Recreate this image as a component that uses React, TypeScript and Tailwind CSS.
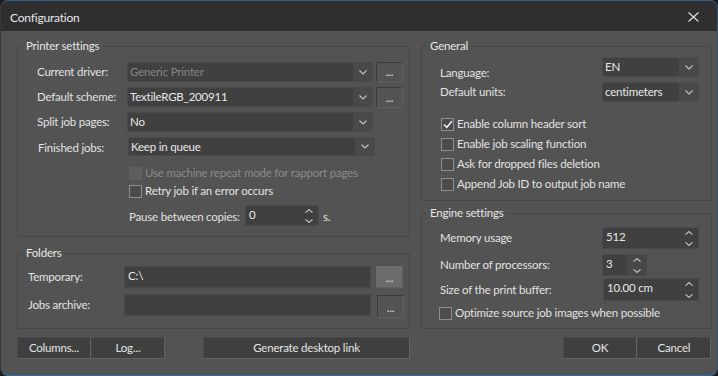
import React from "react";

const font = "font-['Lato','Segoe_UI',sans-serif]";

function Chevron({ up = false }: { up?: boolean }) {
  return (
    <svg width="8" height="5" viewBox="0 0 8 5" className="block">
      <path d={up ? "M0.5 4.5 L4 1 L7.5 4.5" : "M0.5 0.5 L4 4 L7.5 0.5"} stroke="#c4c4c4" fill="none" strokeWidth="1.1" />
    </svg>
  );
}

function SmallChevron({ up = false }: { up?: boolean }) {
  return (
    <svg width="8" height="4" viewBox="0 0 8 4" className="block">
      <path d={up ? "M0.5 3.6 L4 0.6 L7.5 3.6" : "M0.5 0.4 L4 3.4 L7.5 0.4"} stroke="#c8c8c8" fill="none" strokeWidth="1.1" />
    </svg>
  );
}

function Combo({ value, className, disabled = false }: { value: string; className: string; disabled?: boolean }) {
  return (
    <div className={`flex border border-[#4a4a4a] bg-[#404040] ${className}`}>
      <div className={`flex-1 pl-[2px] leading-[17px] ${disabled ? "text-[#858585]" : "text-[#e8e8e8]"}`}>{value}</div>
      <div className="w-[19px] bg-[#494949] flex items-center justify-center">
        <Chevron />
      </div>
    </div>
  );
}

function Spin({ value, className, sep = false }: { value: string; className: string; sep?: boolean }) {
  return (
    <div className={`flex border border-[#4a4a4a] bg-[#404040] ${className}`}>
      <div className="flex-1 pl-[3px] pt-[1px] leading-[16px] text-[#e8e8e8]">{value}</div>
      <div className={`w-[19px] flex flex-col items-center justify-between pt-[3px] pb-[2px] ${sep ? "bg-[#484848]" : ""}`}>
        <SmallChevron up />
        <SmallChevron />
      </div>
    </div>
  );
}

function Dots({ className = "" }: { className?: string }) {
  return (
    <div className={`w-[27px] border border-[#3b3b3b] border-b-[#5f5f5f] border-r-[#5f5f5f] flex items-end justify-center pb-[3px] text-[#e0e0e0] leading-[12px] ${className}`}>
      ...
    </div>
  );
}

function Check({ label, checked = false, disabled = false, className = "" }: { label: string; checked?: boolean; disabled?: boolean; className?: string }) {
  return (
    <div className={`flex items-center whitespace-nowrap ${className}`}>
      <div
        className={`w-[13px] h-[13px] mr-[3px] flex items-center justify-center ${
          disabled ? "bg-[#5e5e5e]" : "border border-[#8e8e8e] bg-[#4c4c4c]"
        }`}
      >
        {checked && (
          <svg width="10" height="9" viewBox="0 0 10 9">
            <path d="M1 4.5 L3.8 7.3 L9 1.3" stroke="#f0f0f0" fill="none" strokeWidth="1.5" />
          </svg>
        )}
      </div>
      <span className={disabled ? "text-[#8a8a8a]" : "text-[#e2e2e2]"}>{label}</span>
    </div>
  );
}

function Group({ title, className, children }: { title: string; className: string; children: React.ReactNode }) {
  return (
    <div className={`relative border border-[#474747] rounded-[2px] ${className}`}>
      <span className="absolute -top-[9px] left-[4px] px-[4px] bg-[#535353] text-[#e6e6e6] leading-[16px]">{title}</span>
      {children}
    </div>
  );
}

function Btn({ label, className }: { label: string; className: string }) {
  return (
    <div className={`h-[22px] bg-[#3f3f3f] border border-[#474747] border-b-[#626262] border-r-[#626262] flex items-center justify-center text-[#e4e4e4] ${className}`}>
      {label}
    </div>
  );
}

const lbl = "whitespace-nowrap text-[#e2e2e2]";

export default function App() {
  return (
    <div className={`w-[718px] h-[376px] ${font} text-[11.5px] tracking-[-0.2px] overflow-hidden bg-[#1c1c1c]`}>
      <div className="w-full h-full rounded-[8px] overflow-hidden border-t border-b border-t-[#2b5e90] border-b-[#2a6aa8] border-l border-l-[#383838] border-r border-r-[#2a5580] bg-[#535353] flex flex-col">
        {/* title bar */}
        <div className="h-[30px] bg-[#2f2f2f] flex items-center justify-between pl-[9px] pr-[18px] shrink-0">
          <span className="text-[#e8e8e8] text-[12px] pt-[3px]">Configuration</span>
          <svg width="11" height="10" viewBox="0 0 11 10" className="mt-[2px]">
            <path d="M0.5 0.5 L10.5 9.5 M10.5 0.5 L0.5 9.5" stroke="#e0e0e0" strokeWidth="1.2" />
          </svg>
        </div>

        <div className="flex gap-[11px] pl-[16px] pt-[15px]">
          {/* left column */}
          <div className="w-[393px] flex flex-col">
            <Group title="Printer settings" className="h-[191px] pt-[15px]">
              <div className="flex flex-col gap-[5px]">
                <div className="flex items-center h-[20px]">
                  <span className={`w-[109px] pl-[19px] ${lbl}`}>Current driver:</span>
                  <Combo value="Generic Printer" disabled className="w-[246px] h-[20px]" />
                  <Dots className="ml-[3px] h-[20px]" />
                </div>
                <div className="flex items-center h-[20px]">
                  <span className={`w-[109px] pl-[19px] ${lbl}`}>Default scheme:</span>
                  <Combo value="TextileRGB_200911" className="w-[246px] h-[20px]" />
                  <Dots className="ml-[3px] h-[21px]" />
                </div>
                <div className="flex items-center h-[20px]">
                  <span className={`w-[109px] pl-[19px] ${lbl}`}>Split job pages:</span>
                  <Combo value="No" className="w-[246px] h-[20px]" />
                </div>
                <div className="flex items-center h-[19px]">
                  <span className={`w-[110px] pl-[20px] pt-[3px] ${lbl}`}>Finished jobs:</span>
                  <Combo value="Keep in queue" className="w-[247px] h-[19px]" />
                </div>
              </div>
              <div className="pl-[111px] mt-[8px]">
                <Check label="Use machine repeat mode for rapport pages" disabled className="h-[18px]" />
                <Check label="Retry job if an error occurs" className="h-[18px]" />
                <div className="flex items-center mt-[5px] h-[21px]">
                  <span className={`w-[116px] pt-[2px] ${lbl}`}>Pause between copies:</span>
                  <Spin value="0" className="w-[74px] h-[21px]" />
                  <span className={`ml-[4px] pt-[3px] ${lbl}`}>s.</span>
                </div>
              </div>
            </Group>

            <Group title="Folders" className="h-[76px] mt-[16px] pt-[12px]">
              <div className="flex flex-col gap-[6px]">
                <div className="flex items-center h-[22px]">
                  <span className={`w-[106px] pl-[10px] ${lbl}`}>Temporary:</span>
                  <div className="w-[247px] h-[22px] border border-[#4a4a4a] bg-[#404040] text-[#e8e8e8] pl-[3px] leading-[17px]">C:\</div>
                  <Dots className="ml-[5px] h-[22px] bg-[#6c6c6c] border-[#6c6c6c]" />
                </div>
                <div className="flex items-center h-[22px]">
                  <span className={`w-[106px] pl-[10px] ${lbl}`}>Jobs archive:</span>
                  <div className="w-[247px] h-[22px] border border-[#4a4a4a] bg-[#404040]" />
                  <Dots className="ml-[6px] h-[23px] mt-[2px]" />
                </div>
              </div>
            </Group>

            <div className="flex mt-[8px]">
              <Btn label="Columns..." className="w-[74px]" />
              <Btn label="Log..." className="w-[74px]" />
              <Btn label="Generate desktop link" className="w-[207px] ml-[38px]" />
            </div>
          </div>

          {/* right column */}
          <div className="w-[291px] flex flex-col">
            <Group title="General" className="h-[155px] pt-[10px]">
              <div className="flex items-start h-[20px]">
                <span className={`w-[180px] pl-[18px] pt-[7px] ${lbl}`}>Language:</span>
                <Combo value="EN" className="w-[97px] h-[20px]" />
              </div>
              <div className="flex items-center h-[20px] mt-[5px]">
                <span className={`w-[180px] pl-[18px] ${lbl}`}>Default units:</span>
                <Combo value="centimeters" className="w-[97px] h-[20px]" />
              </div>
              <div className="pl-[19px] mt-[12px]">
                <Check label="Enable column header sort" checked className="h-[20px]" />
                <Check label="Enable job scaling function" className="h-[20px]" />
                <Check label="Ask for dropped files deletion" className="h-[20px]" />
                <Check label="Append Job ID to output job name" className="h-[20px]" />
              </div>
            </Group>

            <Group title="Engine settings" className="h-[116px] mt-[12px] pt-[13px]">
              <div className="flex items-center h-[22px]">
                <span className={`w-[180px] pl-[18px] ${lbl}`}>Memory usage</span>
                <Spin value="512" className="w-[97px] h-[22px]" />
              </div>
              <div className="flex items-center h-[22px] mt-[5px]">
                <span className={`w-[180px] pl-[18px] ${lbl}`}>Number of processors:</span>
                <Spin value="3" sep className="w-[45px] h-[22px]" />
              </div>
              <div className="flex items-center h-[23px] mt-[2px]">
                <span className={`w-[181px] pl-[18px] ${lbl}`}>Size of the print buffer:</span>
                <Spin value="10.00 cm" className="w-[96px] h-[23px]" />
              </div>
              <div className="pl-[17px] mt-[2px]">
                <Check label="Optimize source job images when possible" className="h-[20px]" />
              </div>
            </Group>

            <div className="flex justify-end mt-[8px] pr-[1px]">
              <Btn label="OK" className="w-[74px]" />
              <Btn label="Cancel" className="w-[74px]" />
            </div>
          </div>
        </div>
      </div>
    </div>
  );
}
